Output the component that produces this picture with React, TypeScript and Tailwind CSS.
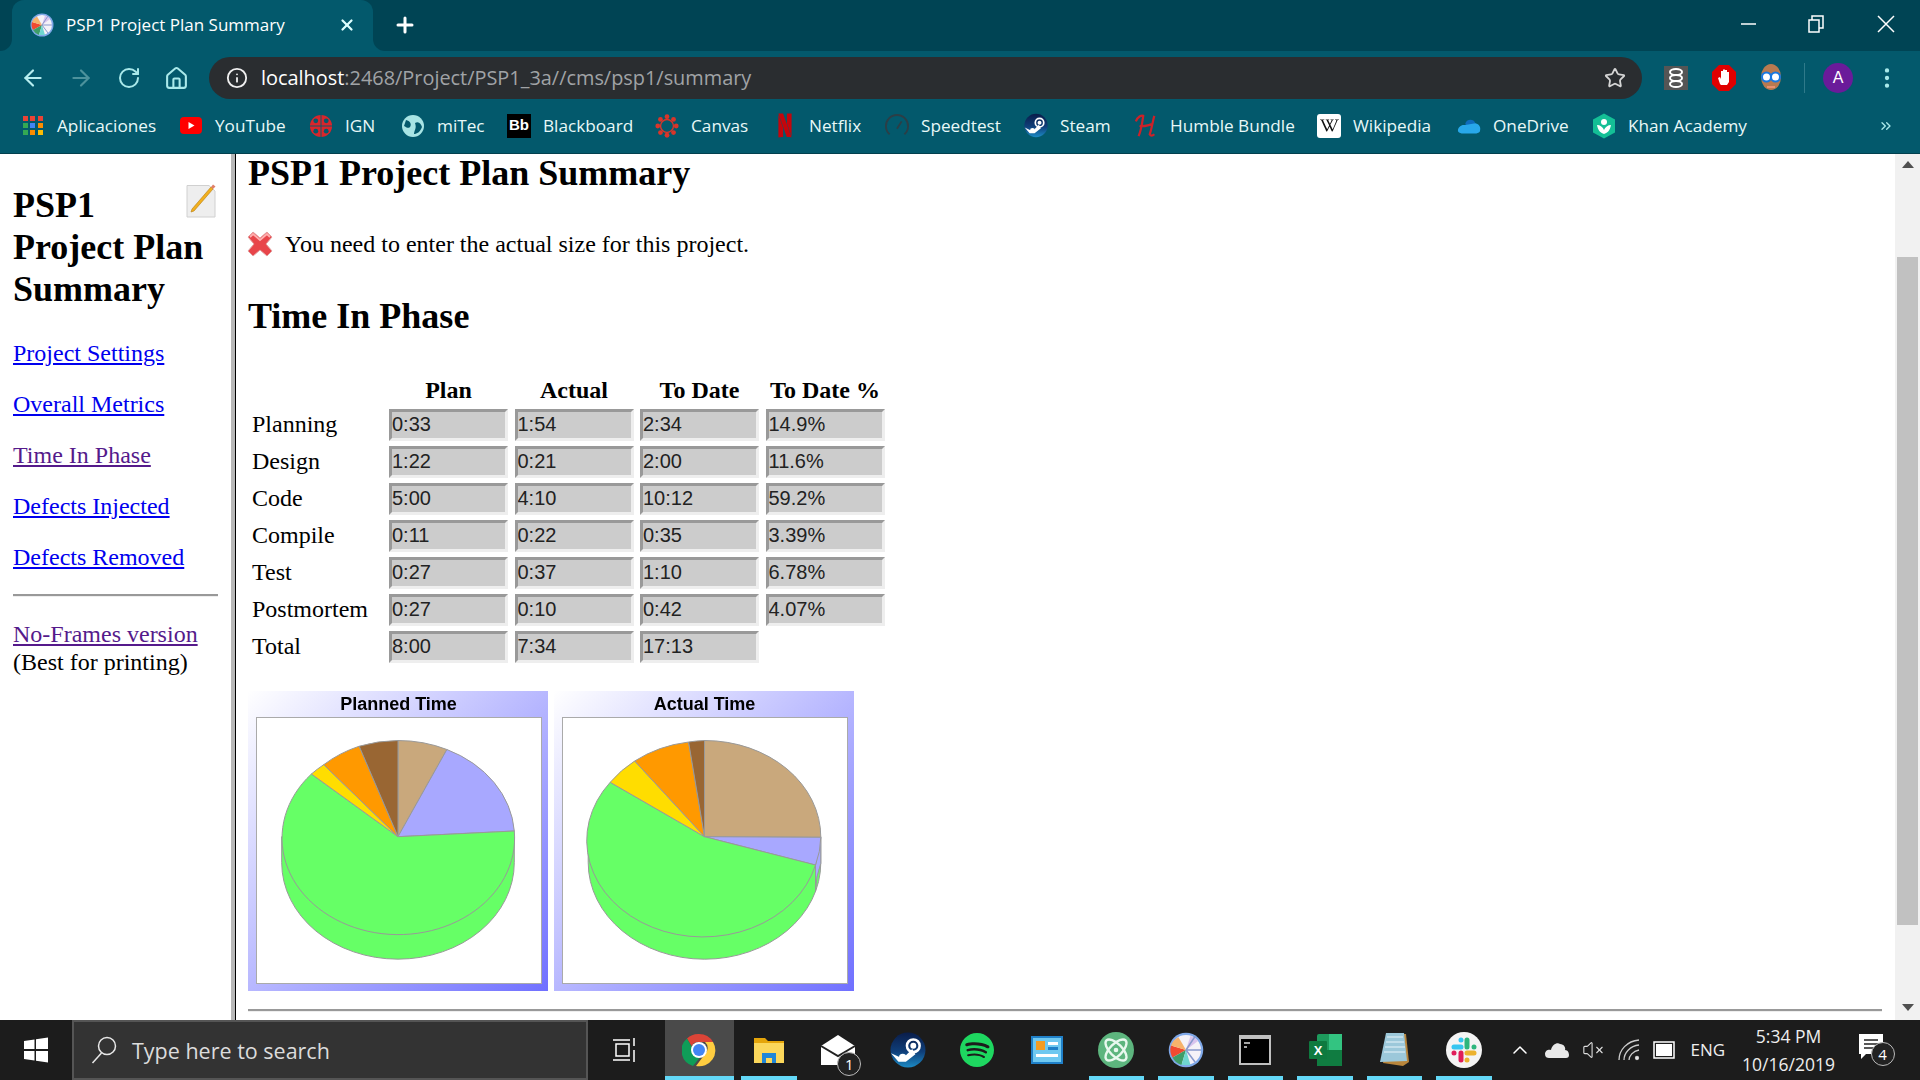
import React from "react";
import { ArrowLeft, ArrowRight, RotateCw, House, Info, Star, X, Plus, EllipsisVertical, ChevronUp, ChevronsRight, VolumeX, Atom } from "lucide-react";
import { SiNetflix, SiSpotify, SiWikipedia } from "react-icons/si";

const UI = "font-['Open_Sans','Noto_Sans',sans-serif]";
const SERIF = "font-['Liberation_Serif',serif]";

function PspIcon({ size = 24 }: { size?: number }) {
  return (
    <svg width={size} height={size} viewBox="0 0 24 24">
      <circle cx="12" cy="12" r="11.5" fill="#7fa8e8" />
      <circle cx="12" cy="12" r="10" fill="#f5f2f8" />
      <path d="M12 12 L2 9 A10 10 0 0 0 3 17 Z" fill="#f04a30" />
      <path d="M12 12 L3 17 A10 10 0 0 0 9 22 Z" fill="#3f9d68" />
      <path d="M12 12 L9 22 L15 22 Z" fill="#6fd6d0" />
      <path d="M12 12 L20 6 A10 10 0 0 0 15 2.5 Z" fill="#d9c4ee" />
      <path d="M12 12 L2 9 A10 10 0 0 1 7 3.5 Z" fill="#f6b26b" />
      <path d="M12 12 L18 3 M12 12 L22 12 M12 12 L18 20" stroke="#8899cc" strokeWidth="1" />
    </svg>
  );
}

function SteamIcon({ size, id }: { size: number; id: string }) {
  return (
    <svg width={size} height={size} viewBox="0 0 34 34">
      <defs>
        <linearGradient id={id} x1="0" y1="0" x2="0" y2="1">
          <stop offset="0" stopColor="#0a1d4a" />
          <stop offset="0.55" stopColor="#0f3f7a" />
          <stop offset="1" stopColor="#1c8ac4" />
        </linearGradient>
      </defs>
      <circle cx="17" cy="17" r="16.5" fill={`url(#${id})`} />
      <path d="M1 20 L12 25 L21 16 L24 21 L15 28 L8 28 Z" fill="#fff" />
      <circle cx="22" cy="13" r="6" fill="none" stroke="#fff" strokeWidth="2.4" />
      <circle cx="22" cy="13" r="2.800" fill="#fff" />
      <circle cx="12" cy="24" r="3.500" fill="#fff" />
    </svg>
  );
}

function Apps() {
  const c = ["#ea4335", "#ea4335", "#ea4335", "#34a853", "#4285f4", "#fb8c00", "#34a853", "#fb8c00", "#fbbc05"];
  return (
    <div className="grid grid-cols-3 gap-[2px] w-[20px]">
      {c.map((x, i) => (
        <svg key={i} width="5" height="5"><rect width="5" height="5" fill={x} /></svg>
      ))}
    </div>
  );
}

function Dots({ ring }: { ring?: boolean }) {
  const pts = [0, 45, 90, 135, 180, 225, 270, 315];
  return (
    <svg width="26" height="26" viewBox="0 0 26 26">
      {ring ? (
        <>
          {pts.map((a) => (
            <circle key={a} cx={13 + 10 * Math.cos((a * Math.PI) / 180)} cy={13 + 10 * Math.sin((a * Math.PI) / 180)} r="2.6" fill="#d9352a" />
          ))}
          <circle cx="13" cy="13" r="7" fill="none" stroke="#d9352a" strokeWidth="1.5" />
        </>
      ) : (
        <>
          <circle cx="13" cy="13" r="12" fill="#d8262c" />
          {[45, 135, 225, 315].map((a) => (
            <circle key={a} cx={13 + 8 * Math.cos((a * Math.PI) / 180)} cy={13 + 8 * Math.sin((a * Math.PI) / 180)} r="2.6" fill="#03596c" />
          ))}
          <path d="M13 1 V25 M1 13 H25" stroke="#03596c" strokeWidth="1" />
        </>
      )}
    </svg>
  );
}

const bookmarks: { w: string; label: string; icon: React.ReactNode }[] = [
  { w: "w-[158px]", label: "Aplicaciones", icon: <Apps /> },
  {
    w: "w-[130px]",
    label: "YouTube",
    icon: (
      <svg width="24" height="18" viewBox="0 0 24 18"><rect width="22" height="17" x="1" rx="4" fill="#f00" /><path d="M9.5 5 L15.5 8.5 L9.5 12 Z" fill="#fff" /></svg>
    ),
  },
  { w: "w-[92px]", label: "IGN", icon: <Dots /> },
  {
    w: "w-[106px]",
    label: "miTec",
    icon: (
      <svg width="24" height="24" viewBox="0 0 24 24"><circle cx="12" cy="12" r="11" fill="#a8e4e4" /><path d="M5 6 C9 7 11 10 9 13 C7 15 5 13 3 12 Z M14 9 C18 7 20 10 21 13 C19 18 16 20 13 20 C13 16 16 15 14 9 Z" fill="#03596c" /></svg>
    ),
  },
  {
    w: "w-[148px]",
    label: "Blackboard",
    icon: <div className="w-[24px] h-[24px] bg-black text-white text-[15px] font-bold flex items-center justify-center font-['Liberation_Sans',sans-serif]">Bb</div>,
  },
  { w: "w-[118px]", label: "Canvas", icon: <Dots ring /> },
  { w: "w-[112px]", label: "Netflix", icon: <SiNetflix size={25} color="#c4050c" /> },
  {
    w: "w-[139px]",
    label: "Speedtest",
    icon: (
      <svg width="26" height="26" viewBox="0 0 26 26" fill="none" stroke="#2c3e46" strokeWidth="2"><path d="M5 22 A12 12 0 1 1 21 22" /><path d="M13 16 L18 8" /></svg>
    ),
  },
  { w: "w-[110px]", label: "Steam", icon: <SteamIcon size={25} id="steam-a" /> },
  {
    w: "w-[183px]",
    label: "Humble Bundle",
    icon: (
      <svg width="26" height="26" viewBox="0 0 26 26" fill="none" stroke="#cc2229" strokeWidth="2.400"><path d="M2 8 C4 3 8 1 10 2 C9 9 8 17 5 24 M22 2 C20 9 19 17 17 22 C18 24 20 24 22 22 M6 13 C11 14 15 12 20 11" /></svg>
    ),
  },
  { w: "w-[140px]", label: "Wikipedia", icon: <div className="w-[24px] h-[24px] bg-white rounded-[3px] flex items-center justify-center"><SiWikipedia size={19} color="#111" /></div> },
  {
    w: "w-[135px]",
    label: "OneDrive",
    icon: (
      <svg width="26" height="18" viewBox="0 0 26 18"><path d="M9 6 C11 1 18 1 20 6 L10 11 Z" fill="#0f6cbd" /><path d="M1 14 C1 10 5 7 9 8 L20 6 C24 7 26 10 25 14 C25 16 23 17 21 17 L5 17 C3 17 1 16 1 14 Z" fill="#28a8ea" /></svg>
    ),
  },
  {
    w: "w-[150px]",
    label: "Khan Academy",
    icon: (
      <svg width="24" height="26" viewBox="0 0 24 26"><path d="M12 0.500 L23 6.500 V19.500 L12 25.500 L1 19.500 V6.500 Z" fill="#14bf96" /><circle cx="12" cy="9" r="3" fill="#fff" /><path d="M5 12 C6 18 9 20 12 21 C15 20 18 18 19 12 C16 12 13 14 12 17 C11 14 8 12 5 12 Z" fill="#fff" /></svg>
    ),
  },
];

function TitleBar() {
  return (
    <div className="flex h-[51px] bg-[linear-gradient(#004454_50%,#03596c_50%)]">
      <div className="w-[12px] bg-[#004454] rounded-br-[12px]" />
      <div className="w-[361px] bg-[#03596c] rounded-t-[12px] flex items-center pl-[18px] pb-[1px]">
        <PspIcon size={24} />
        <span className={`ml-[12px] text-white text-[17px] w-[272px] ${UI}`}>PSP1 Project Plan Summary</span>
        <X size={18} strokeWidth={3} color="#dff" />
      </div>
      <div className="flex-1 bg-[#004454] rounded-bl-[12px] flex items-center pl-[20px] pb-[1px]">
        <Plus size={24} strokeWidth={3} color="#fff" />
        <div className="ml-auto flex items-center text-white pb-[3px]">
          <svg width="67" height="20"><path d="M27 10 H42" stroke="#fff" strokeWidth="1.5" /></svg>
          <svg width="70" height="20" viewBox="0 0 70 20" fill="none" stroke="#fff" strokeWidth="1.5"><rect x="28" y="6" width="10" height="12" /><path d="M31 6 V2 H42 V14 H38" /></svg>
          <svg width="69" height="20" viewBox="0 0 69 20" fill="none" stroke="#fff" strokeWidth="1.5"><path d="M27 2 L43 18 M43 2 L27 18" /></svg>
        </div>
      </div>
    </div>
  );
}

function Toolbar() {
  return (
    <div className="h-[51px] bg-[#03596c] flex items-center pl-[20px] pr-[20px] pt-[3px]">
      <ArrowLeft size={26} color="#b6eef0" className="w-[26px]" />
      <ArrowRight size={26} color="#4d929c" className="ml-[22px]" />
      <RotateCw size={24} color="#a9e9ea" className="ml-[23px]" />
      <House size={25} color="#a9e9ea" className="ml-[23px]" />
      <div className="ml-[20px] w-[1433px] h-[42px] rounded-full bg-[#2a2d30] flex items-center pl-[17px] pr-[16px]">
        <Info size={22} color="#f0f0f0" />
        <div className={`ml-[13px] text-[19.9px] ${UI}`}>
          <span className="text-white">localhost</span>
          <span className="text-[#a0a3a6]">:2468/Project/PSP1_3a//cms/psp1/summary</span>
        </div>
        <Star size={22} color="#d5d5d5" className="ml-auto" />
      </div>
      <div className="ml-[22px] w-[24px] h-[24px] bg-[#555] flex items-center justify-center">
        <svg width="16" height="20" viewBox="0 0 16 20" fill="none" stroke="#fff" strokeWidth="2"><ellipse cx="8" cy="4" rx="6" ry="3" /><ellipse cx="8" cy="10" rx="6" ry="3" /><ellipse cx="8" cy="16" rx="6" ry="3" /></svg>
      </div>
      <svg className="ml-[23px]" width="26" height="28" viewBox="0 0 26 28"><path d="M8 1 H18 L25 8 V20 L18 27 H8 L1 20 V8 Z" fill="#e00000" /><path d="M9 20 L7 14 L9 13 L10 15 V7 H12 V12 V5.500 H14 V12 V6 H16 V12 V8 H18 V18 L16 21 H10 Z" fill="#fff" /></svg>
      <svg className="ml-[22px]" width="24" height="30" viewBox="0 0 24 30"><ellipse cx="12" cy="14" rx="10" ry="13" fill="#b87a50" /><circle cx="7.500" cy="14" r="4.500" fill="#fff" stroke="#1878e0" strokeWidth="2" /><circle cx="16.500" cy="14" r="4.500" fill="#fff" stroke="#1878e0" strokeWidth="2" /><path d="M8 24 H16" stroke="#e89070" strokeWidth="2" /></svg>
      <div className="ml-[21px] w-[1px] h-[30px] bg-[#2f7a8a]" />
      <div className="ml-[18px] w-[30px] h-[30px] rounded-full bg-[#6a1b9a] text-white text-[16px] flex items-center justify-center font-['Liberation_Sans',sans-serif]">A</div>
      <EllipsisVertical size={26} color="#a9e9ea" className="ml-[21px]" />
    </div>
  );
}

function Bookmarks() {
  return (
    <div className="h-[52px] bg-[#03596c] flex items-center pl-[21px] pb-[4px] border-b border-[#02404e]">
      {bookmarks.map((b) => (
        <div key={b.label} className={`flex items-center shrink-0 ${b.w}`}>
          <div className="w-[24px] h-[30px] flex items-center justify-center shrink-0">{b.icon}</div>
          <span className={`ml-[12px] text-[17.2px] text-[#e8f8f8] whitespace-nowrap ${UI}`}>{b.label}</span>
        </div>
      ))}
      <ChevronsRight size={16} color="#a9e9ea" className="ml-[136px]" />
    </div>
  );
}

function Sidebar() {
  const cls = "text-[24px] leading-[28px] underline";
  return (
    <div className={`w-[231px] shrink-0 pl-[13px] pr-[13px] pt-[30px] ${SERIF} text-black`}>
      <svg className="float-right mr-[2px]" width="30" height="34" viewBox="0 0 30 34">
        <path d="M1 1.500 H23 L29 7 V33 H1 Z" fill="#eeeeee" stroke="#d0d0d0" />
        <path d="M6 25 L25 3 L27 5 L8 27 L5 28 Z" fill="#f2b01e" stroke="#b67c10" strokeWidth="0.6" />
        <path d="M25 3 L27 0.500 L29.500 2.500 L27 5 Z" fill="#e0806a" />
      </svg>
      <h1 className="text-[36px] leading-[42px] font-bold">PSP1 Project Plan Summary</h1>
      <div className="mt-[29px] flex flex-col gap-[23px]">
        <a className={`${cls} text-[#0000ee]`}>Project Settings</a>
        <a className={`${cls} text-[#0000ee]`}>Overall Metrics</a>
        <a className={`${cls} text-[#551a8b]`}>Time In Phase</a>
        <a className={`${cls} text-[#0000ee]`}>Defects Injected</a>
        <a className={`${cls} text-[#0000ee]`}>Defects Removed</a>
      </div>
      <div className="mt-[23px] h-[3px] border-t-2 border-[#999] bg-[#eee]" />
      <div className="mt-[24px] text-[24px] leading-[27.5px]">
        <a className="underline text-[#551a8b]">No-Frames version</a>
        <div>(Best for printing)</div>
      </div>
    </div>
  );
}

const rows = [
  ["Planning", "0:33", "1:54", "2:34", "14.9%"],
  ["Design", "1:22", "0:21", "2:00", "11.6%"],
  ["Code", "5:00", "4:10", "10:12", "59.2%"],
  ["Compile", "0:11", "0:22", "0:35", "3.39%"],
  ["Test", "0:27", "0:37", "1:10", "6.78%"],
  ["Postmortem", "0:27", "0:10", "0:42", "4.07%"],
  ["Total", "8:00", "7:34", "17:13", ""],
];

function Cell({ v }: { v: string }) {
  return (
    <input
      readOnly
      value={v}
      className="w-[119px] h-[32px] bg-[#cccccc] border-[3px] border-t-[#999999] border-l-[#999999] border-r-[#eeeeee] border-b-[#eeeeee] text-[20px] text-[#222] pb-[2px] font-['Liberation_Sans',sans-serif] outline-none"
    />
  );
}

function PhaseTable() {
  return (
    <div className="mt-[39px] ml-[4px] grid grid-cols-[130.500px_119px_119px_119px_119px] gap-x-[6.500px] gap-y-[5px] w-fit text-[24px] leading-[28px] text-black">
      <div />
      {["Plan", "Actual", "To Date", "To Date %"].map((h) => (
        <div key={h} className="font-bold text-center whitespace-nowrap">{h}</div>
      ))}
      {rows.map((r) => (
        <React.Fragment key={r[0]}>
          <div className="flex items-center pb-[2px]">{r[0]}</div>
          {r.slice(1).map((v, i) => (v ? <Cell key={i} v={v} /> : <div key={i} />))}
        </React.Fragment>
      ))}
    </div>
  );
}

type P = [number, number];
function Pie({ c, pts, blueSide }: { c: P; pts: P[]; blueSide?: boolean }) {
  const colors = ["#c9a87c", "#a8a8ff", "#66ff66", "#ffdd00", "#ff9900", "#996633"];
  const rx = 116.3, ry = 96.5, d = 26;
  const left = c[0] - rx, right = c[0] + rx;
  return (
    <svg width="284" height="265" viewBox="0 0 284 265" className="blur-[0.4px]">
      <path d={`M${left} ${c[1]} V${c[1] + d} A${rx} ${ry} 0 0 0 ${right} ${c[1] + d} V${c[1]} Z`} fill="#66ff66" stroke="#999" />
      {blueSide && (
        <path d={`M${pts[1][0]} ${pts[1][1]} V${pts[1][1] + d} A${rx} ${ry} 0 0 0 ${pts[2][0]} ${pts[2][1] + d} V${pts[2][1]} Z`} fill="#a8a8ff" stroke="#999" />
      )}
      {colors.map((col, i) => {
        const a = pts[i], b = pts[(i + 1) % pts.length];
        const large = col === "#66ff66" ? 1 : 0;
        return <path key={col} d={`M${c[0]} ${c[1]} L${a[0]} ${a[1]} A${rx} ${ry} 0 ${large} 1 ${b[0]} ${b[1]} Z`} fill={col} stroke="#999" strokeLinejoin="round" />;
      })}
    </svg>
  );
}

function Chart({ title, c, pts, blueSide }: { title: string; c: P; pts: P[]; blueSide?: boolean }) {
  return (
    <div className="w-[300px] h-[300px] bg-[linear-gradient(135deg,#ffffff,#7070ff)] pl-[8px] flex flex-col">
      <div className="h-[26px] pr-[7px] flex items-center justify-center text-[18px] font-bold text-black font-['Liberation_Sans',sans-serif] blur-[0.3px]">{title}</div>
      <div className="w-[286px] h-[267px] bg-white border border-[#aaaaaa]">
        <Pie c={c} pts={pts} blueSide={blueSide} />
      </div>
    </div>
  );
}

function Main() {
  return (
    <div className={`flex-1 pl-[12px] pr-[13px] overflow-hidden ${SERIF} text-black`}>
      <h1 className="-mt-[2px] text-[36px] leading-[42px] font-bold">PSP1 Project Plan Summary</h1>
      <div className="mt-[36px] h-[28px] flex items-center text-[24px]">
        <svg width="26" height="26" viewBox="0 0 26 26" className="shrink-0 -ml-[1px]">
          <path d="M1 6 L6 1 L13 7 L20 1 L25 6 L19 13 L25 20 L20 25 L13 19 L6 25 L1 20 L7 13 Z" fill="#e8454a" stroke="#e2a0a0" strokeWidth="1" strokeLinejoin="round" />
          <path d="M3 6 L6 3 L13 9 L20 3 L23 6" fill="none" stroke="#ffb0b0" strokeWidth="1.800" />
        </svg>
        <span className="ml-[12px]">You need to enter the actual size for this project.</span>
      </div>
      <h2 className="mt-[37px] text-[36px] leading-[42px] font-bold">Time In Phase</h2>
      <PhaseTable />
      <div className="mt-[28px] flex gap-[6px]">
        <Chart title="Planned Time" c={[141, 118.7]} pts={[[141, 22.5], [189.9, 31.5], [257.3, 113], [54.4, 56], [66.7, 46.7], [102.2, 28.2]]} />
        <Chart title="Actual Time" c={[141.5, 118.7]} pts={[[141.5, 22.5], [257.8, 119.3], [252.5, 147], [47.2, 64.3], [71.7, 43], [125.6, 24]]} blueSide />
      </div>
      <div className="mt-[18px] h-[3px] border-t-2 border-[#999] bg-[#eee]" />
    </div>
  );
}

function Scrollbar() {
  return (
    <div className="w-[25px] shrink-0 bg-[#f1f1f1] flex flex-col items-center">
      <svg className="mt-[7px]" width="12" height="7"><path d="M6 0 L12 7 H0 Z" fill="#505050" /></svg>
      <div className="mt-[89px] w-[21px] h-[668px] bg-[#c1c1c1]" />
      <svg className="mt-[79px]" width="12" height="7"><path d="M0 0 H12 L6 7 Z" fill="#505050" /></svg>
    </div>
  );
}

function Chrome() {
  return (
    <svg width="34" height="34" viewBox="0 0 34 34">
      <path d="M17 1 A16 16 0 0 1 31 9 L17 9 A8 8 0 0 0 9.500 13 L5 5.500 A16 16 0 0 1 17 1 Z" fill="#db4437" />
      <path d="M5 5.500 L12 18 L17.500 25 L11 33 A16 16 0 0 1 5 5.500 Z" fill="#0f9d58" />
      <path d="M31 9 A16 16 0 0 1 14 33 L23 21 A8 8 0 0 0 23 9 Z" fill="#ffcd40" />
      <circle cx="17" cy="17" r="8" fill="#fff" />
      <circle cx="17" cy="17" r="6" fill="#4285f4" />
    </svg>
  );
}

function Slack() {
  return (
    <svg width="28" height="28" viewBox="0 0 28 28" fill="none" strokeWidth="5" strokeLinecap="round">
      <path d="M11 4 V4.100 M4 11 H11" stroke="#36c5f0" />
      <path d="M24 11 V11.100 M17 4 V11" stroke="#2eb67d" />
      <path d="M17 24 V23.900 M24 17 H17" stroke="#ecb22e" />
      <path d="M4 17 V17.100 M11 24 V17" stroke="#e01e5a" />
    </svg>
  );
}

function Task({ active, on, children }: { active?: boolean; on?: boolean; children: React.ReactNode }) {
  return (
    <div className={`relative w-[69.500px] h-[60px] flex items-center justify-center ${active ? "bg-[#4a4a4a]" : ""}`}>
      {children}
      {on && <div className="absolute left-[7px] right-[7px] bottom-0 h-[4px] bg-[#63d8f7]" />}
      {active && <div className="absolute left-0 right-0 bottom-0 h-[4px] bg-[#63d8f7]" />}
    </div>
  );
}

function Badge({ n, cls }: { n: string; cls: string }) {
  return (
    <div className={`absolute w-[24px] h-[24px] rounded-full bg-[#222] border border-[#bbb] text-white text-[15px] flex items-center justify-center ${cls} ${UI}`}>{n}</div>
  );
}

function Taskbar() {
  return (
    <div className={`h-[60px] bg-[#1c1c1c] flex items-center text-white ${UI}`}>
      <div className="w-[72px] flex justify-center">
        <svg width="26" height="26" viewBox="0 0 26 26" fill="#fff"><path d="M1 4 L11.500 2.500 V12 H1 Z M13 2.300 L25 0.500 V12 H13 Z M1 14 H11.500 V23.500 L1 22 Z M13 14 H25 V25.500 L13 23.700 Z" /></svg>
      </div>
      <div className="w-[516px] h-[60px] bg-[#333] border-2 border-[#555] flex items-center pl-[17px]">
        <svg width="26" height="30" viewBox="0 0 26 30" fill="none" stroke="#e8e8e8" strokeWidth="1.500"><circle cx="16" cy="11" r="8.500" /><path d="M10.500 18 L1.500 28" /></svg>
        <span className="ml-[15px] mt-[2px] text-[21.5px] text-[#dcdcdc]">Type here to search</span>
      </div>
      <div className="ml-[7px]" />
      <Task>
        <svg className="mr-[10px]" width="26" height="26" viewBox="0 0 26 26" fill="none" stroke="#fff" strokeWidth="1.500"><path d="M1 3 H18 M1 23 H18 M4 7 H17 V19 H4 Z M22 1 V9 M22 13 V25" /></svg>
      </Task>
      <Task active><Chrome /></Task>
      <Task on>
        <svg width="32" height="30" viewBox="0 0 32 30"><path d="M1 3 H12 L15 6 H31 V27 H1 Z" fill="#e5a50a" /><rect x="1" y="8" width="30" height="20" fill="#fbd75b" /><path d="M9 18 H23 V28 H19 V23 H13 V28 H9 Z" fill="#1f86d8" /></svg>
      </Task>
      <Task>
        <div className="relative">
          <svg width="36" height="32" viewBox="0 0 36 32"><path d="M1 12 L18 1 L35 12 V31 H1 Z" fill="#fff" /><path d="M1 12 L18 22 L35 12" fill="none" stroke="#222" strokeWidth="2" /></svg>
          <Badge n="1" cls="left-[17px] top-[18px]" />
        </div>
      </Task>
      <Task><SteamIcon size={36} id="steam-b" /></Task>
      <Task><SiSpotify size={34} color="#1ed760" /></Task>
      <Task>
        <svg width="32" height="28" viewBox="0 0 32 28"><rect x="1" y="1" width="30" height="26" fill="#6fc8f0" stroke="#1f80c8" strokeWidth="2" /><rect x="5" y="5" width="9" height="9" fill="#f39c22" /><rect x="17" y="6" width="10" height="3" fill="#fff" /><rect x="17" y="11" width="10" height="3" fill="#1f80c8" /><rect x="5" y="18" width="22" height="3" fill="#fff" /></svg>
      </Task>
      <Task on><div className="w-[36px] h-[36px] rounded-full bg-[#5db57e] flex items-center justify-center"><Atom size={28} color="#e8f8ee" /></div></Task>
      <Task on><PspIcon size={36} /></Task>
      <Task on>
        <svg width="34" height="32" viewBox="0 0 34 32"><rect x="1" y="1" width="32" height="30" fill="#c0c0c0" /><rect x="3" y="5" width="28" height="24" fill="#000" /><path d="M6 9 H12 M6 13 H9" stroke="#ddd" strokeWidth="1.500" /></svg>
      </Task>
      <Task on>
        <svg width="34" height="34" viewBox="0 0 34 34"><rect x="9" y="1" width="25" height="32" rx="2" fill="#1d9a5c" /><rect x="21" y="1" width="13" height="16" fill="#33c481" /><rect x="9" y="17" width="25" height="16" fill="#107c41" /><rect x="1" y="8" width="18" height="18" rx="1" fill="#0e7a3f" /><text x="10" y="22" textAnchor="middle" fontSize="13" fontWeight="700" fill="#fff" fontFamily="Liberation Sans">X</text></svg>
      </Task>
      <Task on>
        <svg width="34" height="36" viewBox="0 0 34 36"><path d="M11 2 H29 L32 30 L26 34 L6 31 Z" fill="#b9863c" /><path d="M9 1 H27 L30 29 L3 30 Z" fill="#9cc8da" /><path d="M10 5 L26 5 M9 10 L27 10 M8 15 L28 15 M7 20 L28 20" stroke="#e8f4fa" strokeWidth="1" /></svg>
      </Task>
      <Task on><div className="w-[36px] h-[36px] rounded-full bg-[#f4f4f4] flex items-center justify-center"><Slack /></div></Task>
      <ChevronUp size={24} strokeWidth={1.500} color="#fff" className="ml-[9px]" />
      <svg className="ml-[12px]" width="26" height="18" viewBox="0 0 26 18"><path d="M1 13 C1 9 5 8 7 9 C8 4 13 1 16 3 C20 3 22 7 21 9 C24 9 25 12 25 14 C25 16 24 17 22 17 H5 C3 17 1 16 1 13 Z" fill="#e8e8e8" /></svg>
      <VolumeX size={22} strokeWidth={1.200} color="#ddd" className="ml-[12px]" />
      <svg className="ml-[13px]" width="24" height="24" viewBox="0 0 24 24" fill="none" stroke="#ccc" strokeWidth="1.300"><path d="M2 22 C2 12 10 3 22 2 M7 22 C7 15 13 8 22 7 M12 22 C12 18 16 13 22 12" /><circle cx="20" cy="20" r="1.500" fill="#fff" /></svg>
      <svg className="ml-[12px]" width="22" height="18" viewBox="0 0 22 18"><rect x="1" y="1" width="20" height="16" fill="none" stroke="#fff" strokeWidth="1.500" /><rect x="3" y="3" width="16" height="12" fill="#fff" /></svg>
      <span className="ml-[16px] text-[17px] text-[#eee] w-[40px]">ENG</span>
      <div className="ml-[9px] w-[98px] text-center text-[17.5px] leading-[28px] text-[#eee] whitespace-nowrap">
        <div>5:34 PM</div>
        <div>10/16/2019</div>
      </div>
      <div className="ml-[20px] relative w-[26px] h-[34px]">
        <svg width="26" height="26" viewBox="0 0 26 26"><path d="M1 1 H25 V21 H8 L3 26 V21 H1 Z" fill="#fff" /><path d="M6 7 H20 M6 11 H20 M6 15 H20" stroke="#222" strokeWidth="1.500" /></svg>
        <Badge n="4" cls="left-[13px] top-[9px]" />
      </div>
    </div>
  );
}

export default function App() {
  return (
    <div className="w-[1920px] h-[1080px] flex flex-col overflow-hidden bg-white">
      <TitleBar />
      <Toolbar />
      <Bookmarks />
      <div className="h-[866px] flex overflow-hidden">
        <Sidebar />
        <div className="w-[4px] shrink-0 bg-[#b8b8b8]" />
        <div className="w-[1px] shrink-0 bg-black" />
        <Main />
        <Scrollbar />
      </div>
      <Taskbar />
    </div>
  );
}
